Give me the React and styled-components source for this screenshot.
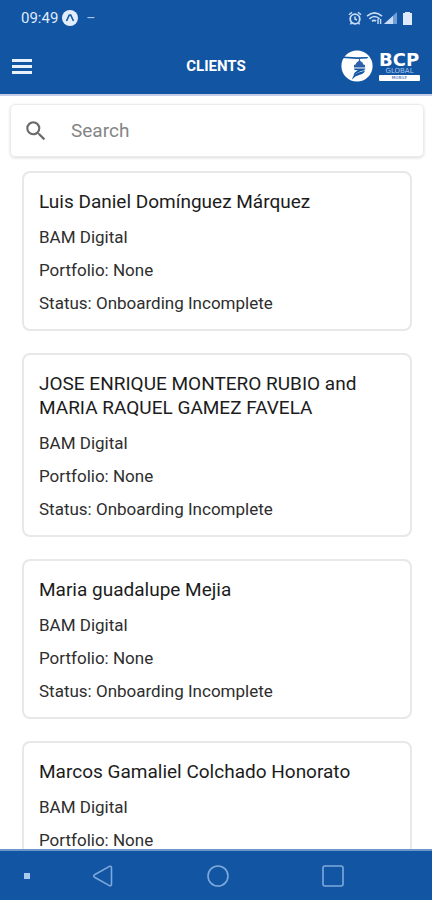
import React from "react";
import styled, { createGlobalStyle } from "styled-components";

const clients = [
  { id: 1, name: "Luis Daniel Domínguez Márquez" },
  { id: 2, name: "JOSE ENRIQUE MONTERO RUBIO and MARIA RAQUEL GAMEZ FAVELA" },
  { id: 3, name: "Maria guadalupe Mejia" },
  { id: 4, name: "Marcos Gamaliel Colchado Honorato" },
];

const StatusIcons = () => (
  <svg width="66" height="16" viewBox="0 0 66 16" fill="none" stroke="#c9dcf5">
    {/* alarm */}
    <circle cx="7" cy="9" r="4.8" strokeWidth="1.8" />
    <path d="M7 6.5V9l2 1M1 4.8 4 2.2M13 4.8 10 2.2M3.6 12.6 2.4 14.4M10.4 12.6l1.2 1.8" strokeWidth="1.5" />
    {/* wifi */}
    <path d="M19 6.2Q26.5 -0.4 34 6.2M21.4 8.8Q26.500 4.2 31.600 8.8M24 11.4Q26 9.4 28 11.2" strokeWidth="1.6" />
    <path d="M30 9v5M32.600 9v5" strokeWidth="1.4" />
    {/* signal */}
    <path d="M49 2v12H36z" fill="#6f9dd6" stroke="none" />
    <path d="M45 6v8h-9z" fill="#c9dcf5" stroke="none" />
    {/* battery */}
    <path d="M55 3h2V2h5v1h2v12h-9z" fill="#dfeafa" stroke="none" />
  </svg>
);

const LogoMark = () => (
  <svg width="32" height="32" viewBox="0 0 32 32">
    <circle cx="16" cy="16" r="15.6" fill="#fff" />
    <path d="M1.600 6.600 16 7.200 27.500 7 26 8.400 16 9 1.200 8z" fill="#1255a3" />
    <path d="M18.500 7.500 19.300 11Q22 12 22.400 14.500L24 15v2.500H13V15l1.600-.5Q15 12 17.700 11z" fill="#2d60a8" />
    <path d="M13 18.500H24.500L23 20.500Q17 21 12.500 26Q12.500 22.500 17 20.300L13.500 20z" fill="#1255a3" />
    <path d="M24 20.800Q23 24 18.500 24.800Q14 25.800 11 29.500Q12 24.500 17.500 22.500Q21 21.500 24 20.800z" fill="#1255a3" />
  </svg>
);

const App = () => {
  return (
    <Screen>
      <GlobalStyle />
      <Header>
        <StatusBar>
          <Clock>09:49</Clock>
          <svg width="16" height="16" viewBox="0 0 16 16">
            <circle cx="8" cy="8" r="8" fill="#e4eefb" />
            <path d="M4.500 11 7.300 5h1.400l2.800 6" fill="none" stroke="#1255a3" strokeWidth="1.6" />
          </svg>
          <Dash>–</Dash>
          <StatusIcons />
        </StatusBar>
        <AppBar>
          <MenuButton aria-label="Open menu">
            <span />
            <span />
            <span />
          </MenuButton>
          <Title>CLIENTS</Title>
          <Brand>
            <LogoMark />
            <BrandText>
              <BrandName>BCP</BrandName>
              <BrandSub>GLOBAL</BrandSub>
              <BrandTag>MOBILE</BrandTag>
            </BrandText>
          </Brand>
        </AppBar>
      </Header>
      <Main>
        <SearchBox>
          <svg width="26" height="26" viewBox="0 0 24 24" fill="#6b6b6b">
            <path d="M15.500 14h-.79l-.28-.27A6.470 6.470 0 0 0 16 9.500 6.500 6.500 0 1 0 9.500 16c1.610 0 3.090-.59 4.230-1.570l.27.28v.79l5 4.990L20.490 19l-4.990-5zm-6 0C7.010 14 5 11.990 5 9.500S7.010 5 9.500 5 14 7.010 14 9.500 11.990 14 9.500 14z" />
          </svg>
          <SearchInput type="text" placeholder="Search" aria-label="Search" />
        </SearchBox>
        <List>
          {clients.map((client) => (
            <Card key={client.id}>
              <Name>{client.name}</Name>
              <Detail>BAM Digital</Detail>
              <Detail>Portfolio: None</Detail>
              <Detail>Status: Onboarding Incomplete</Detail>
            </Card>
          ))}
        </List>
      </Main>
      <NavBar>
        <NavDot />
        <NavButtons>
          <NavButton aria-label="Back">
            <svg width="24" height="24" viewBox="0 0 24 24">
              <path d="M3.500 10.800 18 2.600Q20.500 1.600 20.500 4v16Q20.500 22.400 18 21.400L3.500 13.200Q1.800 12 3.500 10.800z" />
            </svg>
          </NavButton>
          <NavButton aria-label="Home">
            <svg width="24" height="24" viewBox="0 0 24 24">
              <circle cx="12" cy="12" r="10" />
            </svg>
          </NavButton>
          <NavButton aria-label="Recent apps">
            <svg width="24" height="24" viewBox="0 0 24 24">
              <rect x="2" y="2" width="20" height="20" rx="2" />
            </svg>
          </NavButton>
        </NavButtons>
      </NavBar>
    </Screen>
  );
};

export default App;

const GlobalStyle = createGlobalStyle`
  * {
    box-sizing: border-box;
  }
  body {
    margin: 0;
    font-family: Roboto, "Liberation Sans", sans-serif;
    background: #fff;
  }
`;

const Screen = styled.div`
  display: flex;
  flex-direction: column;
  height: 100vh;
`;

const Header = styled.header`
  background: #1255a3;
  color: #fff;
  border-bottom: 2px solid #c6cde8;
`;

const StatusBar = styled.div`
  display: flex;
  align-items: center;
  height: 36px;
  padding: 0 18px 0 21px;
  > svg:last-child {
    margin-left: auto;
  }
`;

const Clock = styled.span`
  font-size: 15px;
  color: #dfeafa;
  margin-right: 4px;
`;

const Dash = styled.span`
  font-size: 14px;
  color: #a9c5ea;
  margin-left: 8px;
`;

const AppBar = styled.div`
  display: grid;
  grid-template-columns: 1fr auto 1fr;
  align-items: center;
  height: 58px;
  padding: 2px 12px 0;
`;

const MenuButton = styled.button`
  display: flex;
  flex-direction: column;
  gap: 3px;
  width: 20px;
  padding: 0;
  border: none;
  background: none;
  cursor: pointer;
  span {
    height: 3px;
    background: #e9f1fb;
  }
`;

const Title = styled.h1`
  margin: 0;
  font-size: 15px;
  font-weight: 700;
  line-height: 20px;
`;

const Brand = styled.div`
  display: flex;
  align-items: center;
  justify-self: end;
  gap: 6px;
`;

const BrandText = styled.div`
  display: flex;
  flex-direction: column;
  width: 41px;
  font-family: "DejaVu Sans", sans-serif;
`;

const BrandName = styled.span`
  font-size: 18px;
  font-weight: 700;
  line-height: 16px;
`;

const BrandSub = styled.span`
  font-size: 7px;
  line-height: 6px;
  text-align: center;
  color: #a9c5ea;
`;

const BrandTag = styled.span`
  margin-top: 1px;
  background: #fff;
  color: #1255a3;
  font-size: 4px;
  line-height: 6px;
  text-align: center;
  border-radius: 1px;
`;

const Main = styled.main`
  flex: 1;
  min-height: 0;
  overflow-y: auto;
  scrollbar-width: none;
  padding: 8px 8px 0 10px;
`;

const SearchBox = styled.label`
  display: flex;
  align-items: center;
  gap: 22px;
  height: 53px;
  padding: 0 12px;
  border: 1px solid #ececec;
  border-radius: 5px;
  box-shadow: 0 1px 3px rgba(0, 0, 0, 0.15);
  svg {
    flex-shrink: 0;
  }
`;

const SearchInput = styled.input`
  flex: 1;
  min-width: 0;
  padding: 0;
  border: none;
  outline: none;
  background: none;
  font-family: inherit;
  font-size: 19px;
  line-height: 24px;
  &::placeholder {
    color: #858585;
  }
`;

const List = styled.div`
  display: flex;
  flex-direction: column;
  gap: 22px;
  padding: 14px 12px;
`;

const Card = styled.article`
  display: flex;
  flex-direction: column;
  gap: 13px;
  padding: 17px 15px 16px;
  border: 2px solid #e8e8e8;
  border-radius: 8px;
`;

const Name = styled.h2`
  margin: 0;
  font-size: 19px;
  font-weight: 400;
  line-height: 24px;
  color: #1c1c1c;
`;

const Detail = styled.p`
  margin: 0;
  font-size: 17px;
  line-height: 20px;
  color: #2e2e2e;
`;

const NavBar = styled.nav`
  display: flex;
  align-items: center;
  gap: 61px;
  height: 51px;
  padding: 0 24px;
  background: #1255a3;
  border-top: 2px solid #6d97cb;
`;

const NavDot = styled.span`
  width: 6px;
  height: 6px;
  background: #a9c9ee;
`;

const NavButtons = styled.div`
  display: flex;
  gap: 91px;
`;

const NavButton = styled.button`
  display: flex;
  padding: 0;
  border: none;
  background: none;
  cursor: pointer;
  svg {
    fill: none;
    stroke: #7ea9dc;
    stroke-width: 1.6;
  }
`;
